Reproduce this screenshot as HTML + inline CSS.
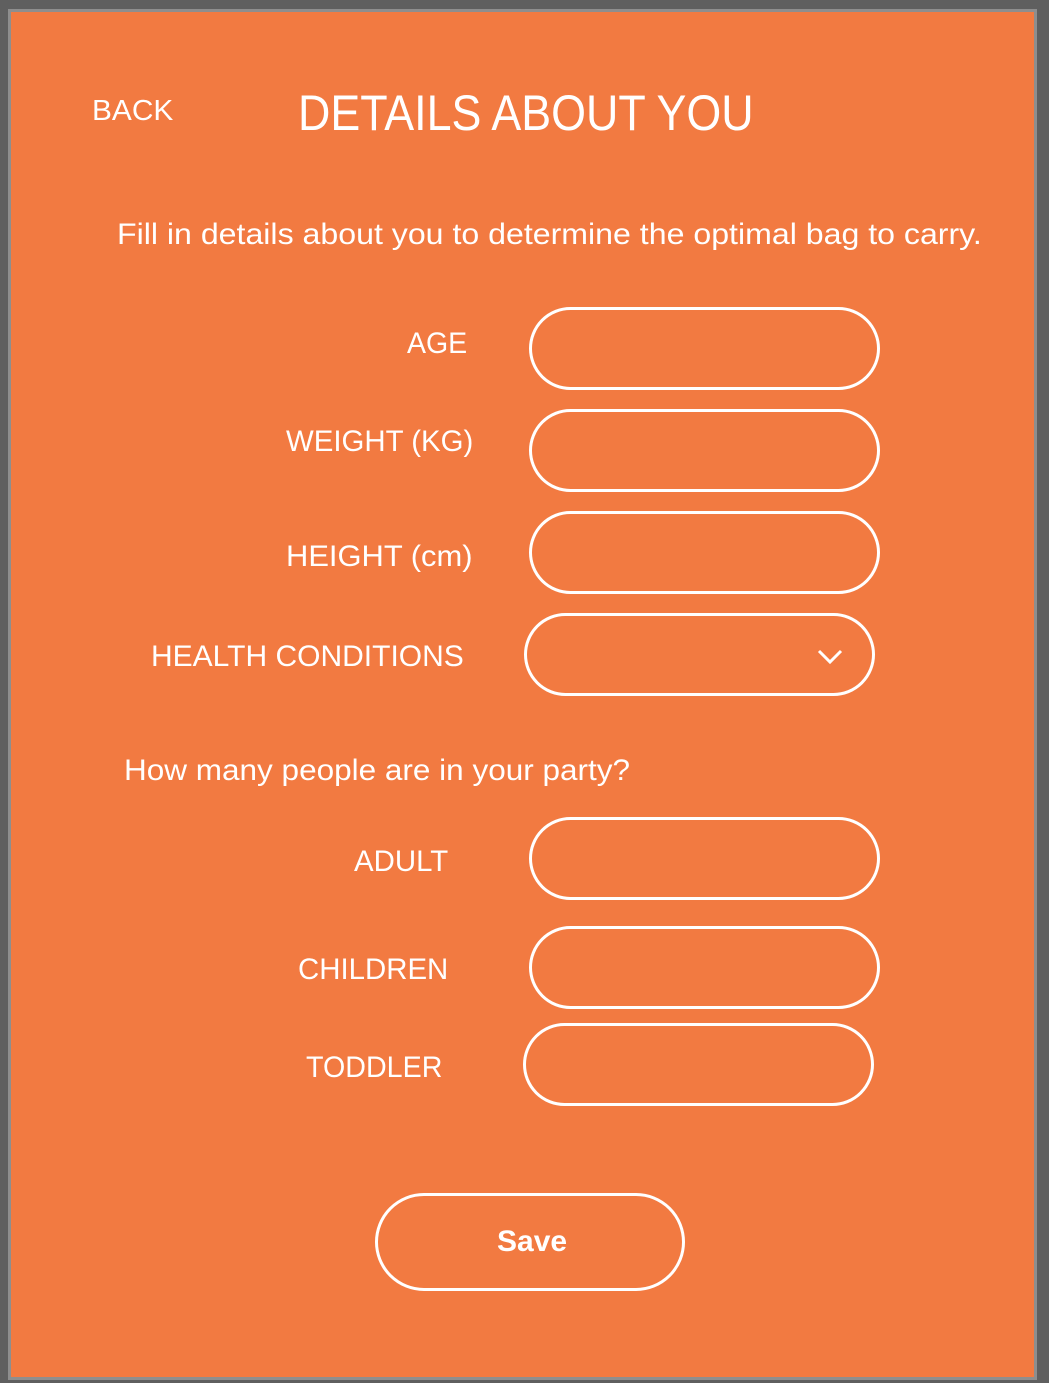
<!DOCTYPE html>
<html><head><meta charset="utf-8"><style>
html,body{margin:0;padding:0}
body{width:1049px;height:1383px;background:#5f5f5f;position:relative;overflow:hidden;font-family:"Liberation Sans",Arial,sans-serif;color:#fff}
.frame{position:absolute;left:8px;top:9px;width:1029px;height:1371px;background:#8e8e8e}
.page{position:absolute;left:11px;top:12px;width:1023px;height:1365px;background:#f27a41}
.t{position:absolute;white-space:nowrap;line-height:1em;transform-origin:left top}
.box{position:absolute;box-sizing:border-box;border:3px solid #fff;border-radius:42px;width:351px;height:83px}
</style></head><body>
<div class="frame"></div><div class="page"></div>
<div class="t" style="left:92px;top:97px;font-size:29px;transform:scaleX(1.03)">BACK</div>
<div class="t" style="left:298px;top:88px;font-size:50px;transform:scaleX(.896)">DETAILS ABOUT YOU</div>
<div class="t" style="left:117px;top:220px;font-size:30px;transform:scaleX(1.07)">Fill in details about you to determine the optimal bag to carry.</div>
<div class="t" style="left:407px;top:329px;font-size:30px;transform:scaleX(.95)">AGE</div>
<div class="t" style="left:286px;top:427px;font-size:30px;transform:scaleX(.98)">WEIGHT (KG)</div>
<div class="t" style="left:286px;top:542px;font-size:30px;transform:scaleX(1.03)">HEIGHT (cm)</div>
<div class="t" style="left:151px;top:642px;font-size:30px;transform:scaleX(1.0)">HEALTH CONDITIONS</div>
<div class="t" style="left:124px;top:756px;font-size:30px;transform:scaleX(1.05)">How many people are in your party?</div>
<div class="t" style="left:354px;top:847px;font-size:30px;transform:scaleX(.98)">ADULT</div>
<div class="t" style="left:298px;top:955px;font-size:30px;transform:scaleX(.98)">CHILDREN</div>
<div class="t" style="left:306px;top:1053px;font-size:30px;transform:scaleX(.955)">TODDLER</div>
<div class="box" style="left:529px;top:307px"></div>
<div class="box" style="left:529px;top:409px"></div>
<div class="box" style="left:529px;top:511px"></div>
<div class="box" style="left:524px;top:613px"></div>
<svg style="position:absolute;left:816px;top:647px" width="30" height="20" viewBox="0 0 30 20"><path d="M3 4 L14 15 L25 4" fill="none" stroke="#fff" stroke-width="3"/></svg>
<div class="box" style="left:529px;top:817px"></div>
<div class="box" style="left:529px;top:926px"></div>
<div class="box" style="left:523px;top:1023px"></div>
<div class="box" style="left:375px;top:1193px;width:310px;height:98px;border-radius:49px"></div>
<div class="t" style="left:497px;top:1227px;font-size:30px;font-weight:bold">Save</div>
</body></html>
